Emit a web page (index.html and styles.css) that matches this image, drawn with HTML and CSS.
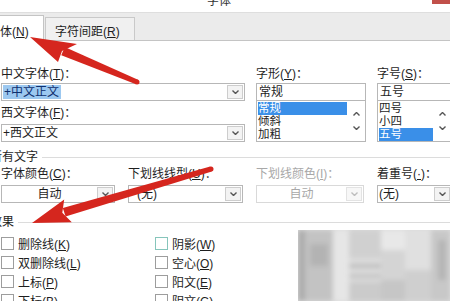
FILE: index.html
```html
<!DOCTYPE html>
<html>
<head>
<meta charset="utf-8">
<title>字体</title>
<link rel="stylesheet" href="styles.css">
</head>
<body>
<div class="window">
  <div class="titlebar"><span class="title">字体</span><span class="close"></span></div>
  <div class="tabs">
    <div class="tab active">字体(<u>N</u>)</div>
    <div class="tab">字符间距(<u>R</u>)</div>
  </div>

  <div class="panel">
    <div class="fonts">
      <div class="col">
        <label>中文字体(<u>T</u>)：</label>
        <div class="combo"><span class="field"><span class="sel">+中文正文</span></span><span class="arrow"><svg width="7" height="4"><path d="M0.5 0.5 L3.5 3.5 L6.5 0.5"/></svg></span></div>
        <label class="second">西文字体(<u>F</u>)：</label>
        <div class="combo next"><span class="field">+西文正文</span><span class="arrow"><svg width="7" height="4"><path d="M0.5 0.5 L3.5 3.5 L6.5 0.5"/></svg></span></div>
      </div>
      <div class="col">
        <label>字形(<u>Y</u>)：</label>
        <div class="edit">常规</div>
        <div class="list">
          <div class="items"><div class="item on">常规</div><div class="item">倾斜</div><div class="item">加粗</div></div>
          <div class="scroll">
            <svg width="7" height="4"><path d="M0.5 3.5 L3.5 0.5 L6.5 3.5"/></svg>
            <svg width="7" height="4"><path d="M0.5 0.5 L3.5 3.5 L6.5 0.5"/></svg>
          </div>
        </div>
      </div>
      <div class="col">
        <label>字号(<u>S</u>)：</label>
        <div class="edit">五号</div>
        <div class="list">
          <div class="items"><div class="item">四号</div><div class="item">小四</div><div class="item on">五号</div></div>
          <div class="scroll">
            <svg width="7" height="4"><path d="M0.5 3.5 L3.5 0.5 L6.5 3.5"/></svg>
            <svg width="7" height="4"><path d="M0.5 0.5 L3.5 3.5 L6.5 0.5"/></svg>
          </div>
        </div>
      </div>
    </div>

    <div class="group first"><span>所有文字</span></div>

    <div class="colors">
      <div class="col">
        <label>字体颜色(<u>C</u>)：</label>
        <div class="combo"><span class="field center">自动</span><span class="arrow"><svg width="7" height="4"><path d="M0.5 0.5 L3.5 3.5 L6.5 0.5"/></svg></span></div>
      </div>
      <div class="col">
        <label>下划线线型(<u>U</u>)：</label>
        <div class="combo"><span class="field pad">(无)</span><span class="arrow"><svg width="7" height="4"><path d="M0.5 0.5 L3.5 3.5 L6.5 0.5"/></svg></span></div>
      </div>
      <div class="col off">
        <label>下划线颜色(<u>I</u>)：</label>
        <div class="combo"><span class="field center">自动</span><span class="arrow"><svg width="7" height="4"><path d="M0.5 0.5 L3.5 3.5 L6.5 0.5"/></svg></span></div>
      </div>
      <div class="col">
        <label>着重号(<u>·</u>)：</label>
        <div class="combo"><span class="field">(无)</span><span class="arrow"><svg width="7" height="4"><path d="M0.5 0.5 L3.5 3.5 L6.5 0.5"/></svg></span></div>
      </div>
    </div>

    <div class="group"><span>效果</span></div>

    <div class="checks">
      <div class="check"><span class="box"></span><span>删除线(<u>K</u>)</span></div>
      <div class="check"><span class="box"></span><span>双删除线(<u>L</u>)</span></div>
      <div class="check"><span class="box"></span><span>上标(<u>P</u>)</span></div>
      <div class="check"><span class="box"></span><span>下标(<u>B</u>)</span></div>
      <div class="check"><span class="box hover"></span><span>阴影(<u>W</u>)</span></div>
      <div class="check"><span class="box"></span><span>空心(<u>O</u>)</span></div>
      <div class="check"><span class="box"></span><span>阳文(<u>E</u>)</span></div>
      <div class="check"><span class="box"></span><span>阴文(<u>G</u>)</span></div>
    </div>
  </div>
</div>

<!-- blurred watermark patch, bottom right -->
<svg class="mosaic" width="152" height="71" viewBox="0 0 152 71">
  <defs><filter id="soft" x="-20%" y="-20%" width="140%" height="140%"><feGaussianBlur stdDeviation="2.5"/></filter></defs>
  <rect width="152" height="71" fill="#dcdcdc"/>
  <g filter="url(#soft)">
    <rect x="0" y="0" width="7" height="71" fill="#acacac"/>
    <rect x="7" y="0" width="28" height="71" fill="#c3c3c3"/>
    <rect x="12" y="14" width="18" height="22" fill="#b3b3b3"/>
    <rect x="35" y="0" width="16" height="71" fill="#e6e6e6"/>
    <rect x="51" y="0" width="32" height="28" fill="#d0d0d0"/>
    <rect x="51" y="34" width="32" height="4" fill="#bdbdbd"/>
    <rect x="51" y="44" width="32" height="4" fill="#c3c3c3"/>
    <rect x="51" y="52" width="32" height="19" fill="#cbcbcb"/>
    <rect x="83" y="0" width="24" height="20" fill="#e8e8e8"/>
    <rect x="83" y="20" width="24" height="30" fill="#d4d4d4"/>
    <rect x="83" y="50" width="24" height="21" fill="#c6c6c6"/>
    <rect x="107" y="0" width="26" height="40" fill="#e0e0e0"/>
    <rect x="107" y="40" width="26" height="31" fill="#cfcfcf"/>
    <rect x="133" y="0" width="19" height="71" fill="#c8c8c8"/>
    <rect x="140" y="10" width="8" height="40" fill="#b5b5b5"/>
  </g>
</svg>

<!-- red annotation arrows -->
<svg class="marks" width="450" height="301" viewBox="0 0 450 301">
  <g fill="#d5261e">
    <polygon points="30,37 77,44 62,51 58,62"/>
    <polygon points="64.7,46.9 138,79.7 136,84.3 61.3,55.2"/>
    <circle cx="137" cy="82" r="2.5"/>
    <polygon points="32,223 64.2,199.5 62.3,212.8 71.8,222.3"/>
    <polygon points="62.8,207.9 210.2,166.6 211.8,171.4 65.6,216.5"/>
    <circle cx="211" cy="169" r="2.5"/>
  </g>
</svg>
</body>
</html>
```

FILE: styles.css
```css
body {
  margin: 0;
  width: 450px;
  height: 301px;
  overflow: hidden;
  position: relative;
  background: #fff;
  font-family: "Liberation Sans", "Noto Sans CJK SC", sans-serif;
  font-size: 12px;
  color: #1e1e1e;
}

u {
  text-decoration: underline;
  text-underline-offset: 1px;
}

/* window chrome */
.titlebar {
  height: 12px;
  display: flex;
  overflow: hidden;
}

.title {
  margin-left: 207px;
  margin-top: -5px;
  line-height: 12px;
  color: #333;
}

.close {
  margin-left: auto;
  width: 18px;
  height: 4px;
  background: #c1504a;
}

.tabs {
  height: 27px;
  display: flex;
  align-items: flex-end;
  background: #ebebeb;
  border-top: 1px solid #dedede;
  border-bottom: 1px solid #c4c4c4;
}

.tab {
  box-sizing: border-box;
  line-height: 16px;
  border: 1px solid #c9c9c9;
  border-bottom: none;
  white-space: nowrap;
}

.tab.active {
  width: 62px;
  height: 26px;
  margin-left: -18px;
  margin-bottom: -1px;
  padding: 8px 0 0 5px;
  background: #fff;
  border-color: #c4c4c4;
}

.tab:not(.active) {
  width: 90px;
  height: 23px;
  margin-left: 1px;
  padding: 6px 0 0 9px;
  background: #f0f0f0;
}

/* panel */
.panel {
  padding: 25px 0 0 1px;
}

label {
  display: block;
  height: 17px;
  line-height: 17px;
  white-space: nowrap;
}

.fonts {
  display: grid;
  grid-template-columns: 244px 110px 75px;
  column-gap: 11px;
}

.colors {
  display: grid;
  grid-template-columns: 114px 115px 108px 75px;
  column-gap: 13px;
}

.second {
  margin-top: 4px;
}

.combo.next {
  margin-top: 2px;
}

.combo {
  box-sizing: border-box;
  height: 18px;
  display: flex;
  border: 1px solid #b7b7b7;
  background: #fff;
}

.field {
  flex: 1;
  line-height: 16px;
  padding-left: 1px;
  white-space: nowrap;
}

.field.center {
  text-align: center;
}

.field.pad {
  padding-left: 8px;
}

.sel {
  display: inline-block;
  line-height: 14px;
  margin-top: 1px;
  padding: 0 2px 0 1px;
  background: #9cc8f0;
  color: #0f2f6e;
}

.arrow {
  box-sizing: border-box;
  width: 16px;
  margin: 1px;
  display: flex;
  align-items: center;
  justify-content: center;
  background: #f3f3f3;
  border: 1px solid #cdcdcd;
}

svg path {
  fill: none;
  stroke: #555;
  stroke-width: 1.4;
}

.edit {
  box-sizing: border-box;
  height: 18px;
  line-height: 16px;
  padding-left: 2px;
  border: 1px solid #b7b7b7;
}

.list {
  box-sizing: border-box;
  height: 41px;
  display: flex;
  border: 1px solid #b7b7b7;
  border-top: none;
}

.items {
  flex: 1;
  padding: 1px 0 0 1px;
}

.item {
  font-size: 11.5px;
  line-height: 13px;
  height: 13px;
}

.item.on {
  background: #3a8fe8;
  color: #fff;
}

.scroll {
  width: 18px;
  display: flex;
  flex-direction: column;
  justify-content: space-around;
  align-items: center;
  padding: 6px 0;
}

.group {
  display: flex;
  align-items: center;
  gap: 4px;
  margin: 11px 0 0 -11px;
  line-height: 17px;
}

.group.first {
  margin-top: 7px;
}

.group::after {
  content: "";
  flex: 1;
  border-top: 1px solid #dcdcdc;
}

.colors .combo {
  margin-top: 2px;
}

.off label,
.off .field {
  color: #a8a8a8;
}

.off .combo {
  border-color: #d9d9d9;
}

.off .arrow {
  border-color: #e3e3e3;
  background: #f7f7f7;
}

.off svg path {
  stroke: #bdbdbd;
}

/* effects */
.checks {
  margin-top: 3px;
  display: grid;
  grid-template-columns: 154px 150px;
  grid-template-rows: repeat(4, 19px);
  grid-auto-flow: column;
}

.check {
  display: flex;
  align-items: center;
  gap: 4px;
  white-space: nowrap;
}

.box {
  box-sizing: border-box;
  width: 13px;
  height: 13px;
  border: 1px solid #9d9d9d;
  background: #fff;
}

.box.hover {
  border-color: #86c5bb;
}

/* overlays */
.mosaic {
  position: absolute;
  left: 298px;
  top: 230px;
}

.marks {
  position: absolute;
  left: 0;
  top: 0;
  pointer-events: none;
}
```
